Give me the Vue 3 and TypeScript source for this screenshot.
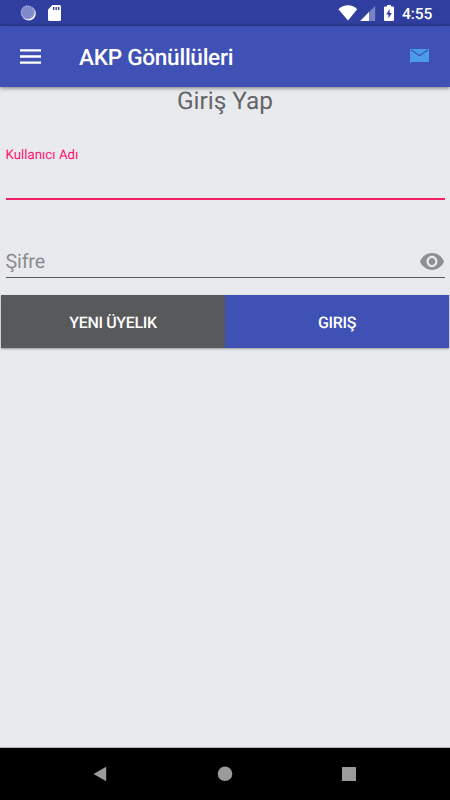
<script setup lang="ts">
import { ref } from 'vue'

const username = ref('')
const password = ref('')
const showPassword = ref(false)
</script>

<template>
  <div class="screen">
    <header class="status">
      <svg class="sync" width="16" height="16" viewBox="0 0 16 16">
        <circle cx="8.7" cy="8.5" r="7.1" fill="#fff" />
        <circle cx="7.7" cy="7.4" r="7" fill="#7f88c8" />
        <circle cx="7.7" cy="7.4" r="6.2" fill="none" stroke="#a9afdb" stroke-width="1.4" stroke-dasharray="1 1.2" />
      </svg>
      <svg class="sd" width="13" height="16" viewBox="0 0 13 16">
        <path fill="#fff" d="M4.5 0H11.5Q13 0 13 1.5V14.5Q13 16 11.5 16H1.5Q0 16 0 14.5V4.5Z" />
        <path fill="#303f9f" d="M5 2h1.4v3H5zM7.5 2h1.4v3H7.5zM10 2h1.4v3H10z" />
      </svg>
      <span class="grow"></span>
      <svg class="wifi" width="20" height="16" viewBox="0 0 20 16">
        <path fill="#fff" d="M.4 4.2Q4.5.3 10 .3T19.2 4.2L10 15.6Z" />
      </svg>
      <svg class="signal" width="16" height="16" viewBox="0 0 16 16">
        <path fill="#7982c3" d="M15.2.8V16H.2Z" />
        <path fill="#fff" d="M9 7V16H.2Z" />
      </svg>
      <svg class="battery" width="10" height="16" viewBox="0 0 10 16">
        <path fill="#fff" d="M3 0H7V1.6H9Q10 1.6 10 2.6V15Q10 16 9 16H1Q0 16 0 15V2.6Q0 1.6 1 1.6H3Z" />
        <path fill="#303f9f" d="M5.6 4L2.3 9.4H4.5V13.6L7.8 8H5.6Z" />
      </svg>
      <span class="clock">4:55</span>
    </header>

    <nav class="toolbar">
      <svg class="menu" width="21" height="15" viewBox="0 0 21 15">
        <path fill="#fff" d="M0 .2h21v2.4H0zM0 6.3h21v2.4H0zM0 12.4h21v2.4H0z" />
      </svg>
      <h1>AKP Gönüllüleri</h1>
      <svg class="mail" width="19" height="15" viewBox="0 0 19 15">
        <path fill="#4a9ceb" d="M0 0H19V13H1.6L0 15Z" />
        <path fill="none" stroke="#3f51b5" stroke-width="1.1" d="M1 .8L9.5 6.8L18 .8" />
      </svg>
    </nav>

    <main>
      <h2>Giriş Yap</h2>
      <div class="field user">
        <label for="username">Kullanıcı Adı</label>
        <input id="username" v-model="username" type="text" />
      </div>
      <div class="field pass">
        <input v-model="password" :type="showPassword ? 'text' : 'password'" placeholder="Şifre" />
        <svg class="eye" width="24" height="17" viewBox="1 4.5 22 15" preserveAspectRatio="none" @click="showPassword = !showPassword">
          <path fill="#8e8f91" d="M12 4.5C7 4.5 2.73 7.61 1 12c1.73 4.39 6 7.5 11 7.5s9.27-3.11 11-7.5c-1.73-4.39-6-7.5-11-7.5zM12 17c-2.76 0-5-2.24-5-5s2.24-5 5-5 5 2.24 5 5-2.24 5-5 5zm0-8c-1.66 0-3 1.34-3 3s1.34 3 3 3 3-1.34 3-3-1.34-3-3-3z" />
        </svg>
      </div>
      <div class="actions">
        <button class="register">YENI ÜYELIK</button>
        <button class="login">GIRIŞ</button>
      </div>
    </main>

    <footer>
      <svg width="14" height="16" viewBox="0 0 14 16"><path fill="#9b9b9b" d="M13.2.8V15.2L.5 8Z" /></svg>
      <svg width="16" height="16" viewBox="0 0 16 16"><circle cx="8" cy="7.8" r="7.3" fill="#9b9b9b" /></svg>
      <svg width="14" height="14" viewBox="0 0 14 14"><rect width="14" height="14" rx=".6" fill="#9b9b9b" /></svg>
    </footer>
  </div>
</template>

<style>
body {
  margin: 0;
}
</style>

<style scoped>
* {
  box-sizing: border-box;
}
.screen {
  width: 450px;
  height: 800px;
  display: flex;
  flex-direction: column;
  overflow: hidden;
  background: #e8eaee;
  font-family: Roboto, sans-serif;
  text-rendering: geometricPrecision;
}
svg {
  display: block;
  flex: none;
}
.status {
  height: 26px;
  flex: none;
  display: flex;
  align-items: flex-start;
  padding: 5px 17px 0 20px;
  background: linear-gradient(#303f9f 23px, #2b3991);
}
.sd {
  margin-left: 12px;
}
.grow {
  flex: 1;
}
.signal {
  margin-left: 2px;
}
.battery {
  margin-left: 8px;
}
.clock {
  width: 31px;
  margin-left: 8px;
  color: #fff;
  font-size: 15.6px;
  font-weight: 500;
  line-height: 18px;
  letter-spacing: -0.15px;
  white-space: nowrap;
}
.toolbar {
  height: 61px;
  flex: none;
  display: flex;
  align-items: center;
  padding: 0 21px 0 20px;
  background: #3f51b5;
  box-shadow: 0 1px 4px rgba(0, 0, 0, 0.5);
}
h1 {
  flex: 1;
  margin: 3px 0 0 38px;
  color: #fff;
  font-size: 22.6px;
  font-weight: 500;
  line-height: 28px;
  letter-spacing: -0.28px;
}
main {
  flex: 1;
  border-bottom: 1px solid #b0b1b4;
}
h2 {
  margin: 0;
  color: #646567;
  font-size: 24.4px;
  font-weight: 400;
  line-height: 28px;
  text-align: center;
}
.field {
  display: flex;
  margin: 0 5.5px;
}
.user {
  height: 85px;
  flex-direction: column;
  padding-top: 32px;
  border-bottom: 2px solid #f02264;
}
label {
  color: #ff1472;
  font-size: 13.3px;
  line-height: 18px;
}
input {
  width: 100%;
  min-width: 0;
  flex: 1;
  padding: 0;
  border: 0;
  outline: 0;
  background: transparent;
  color: #333;
  font: 19.7px/26px Roboto, sans-serif;
  text-rendering: geometricPrecision;
}
input::placeholder {
  color: #8b8c8e;
  opacity: 1;
}
.pass {
  height: 33px;
  margin-top: 45px;
  align-items: flex-start;
  border-bottom: 1px solid #58595b;
}
.pass input {
  height: 32px;
  letter-spacing: -0.15px;
}
.eye {
  margin: 8px 1px 0 0;
}
.actions {
  display: flex;
  height: 53px;
  margin: 17px 1px 0;
  box-shadow: 0 1px 2px rgba(0, 0, 0, 0.35);
}
button {
  flex: 1;
  padding: 2px 0 0;
  border: 0;
  color: #fff;
  font: 500 16px/20px Roboto, sans-serif;
  letter-spacing: -0.35px;
  text-rendering: geometricPrecision;
}
.register {
  background: #58595b;
}
.login {
  background: #3f51b5;
}
footer {
  height: 52px;
  flex: none;
  display: flex;
  align-items: center;
  justify-content: space-between;
  padding: 0 94px 0 93px;
  background: #000;
}
</style>
